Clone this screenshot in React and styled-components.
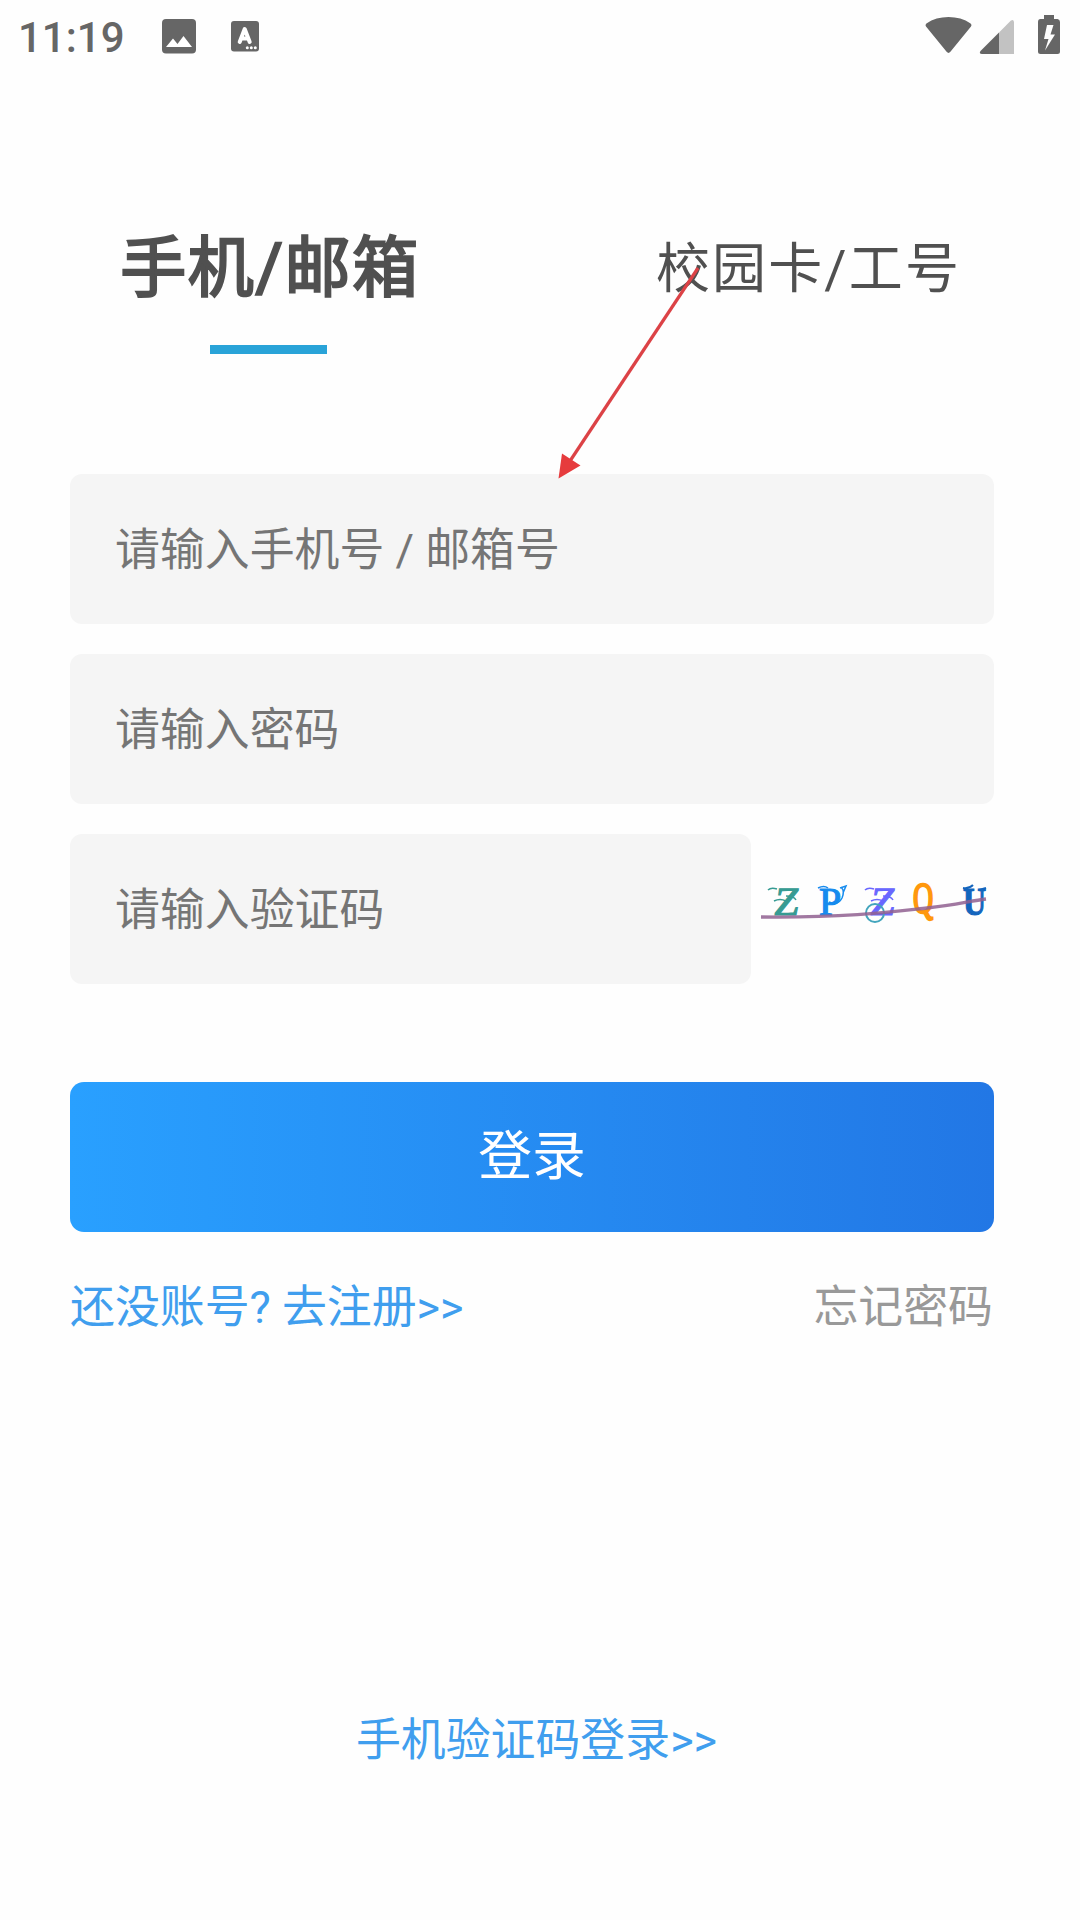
import styled, { createGlobalStyle } from "styled-components";

const GlobalStyle = createGlobalStyle`
  * {
    box-sizing: border-box;
  }

  body {
    margin: 0;
    background-color: #fff;
    font-family: Roboto, "Noto Sans CJK SC", sans-serif;
  }
`;

const Screen = styled.div`
  position: relative;
  display: flex;
  flex-direction: column;
  width: 1080px;
  height: 1920px;
  background-color: #fefefe;
  overflow: hidden;
`;

const StatusBar = styled.header`
  display: flex;
  justify-content: space-between;
  align-items: center;
  height: 74px;
  padding: 0 20px 0 18px;
  color: #666;
`;

const StatusGroup = styled.div`
  display: flex;
  align-items: center;
`;

const Clock = styled.span`
  width: 144px;
  padding-top: 2px;
  font-size: 42px;
  font-weight: 500;
  line-height: 72px;
`;

const StatusIcon = styled.svg`
  display: block;
  width: ${(props) => props.$width}px;
  height: 74px;
`;

const Tabs = styled.nav`
  display: grid;
  grid-template-columns: 1fr 1fr;
  height: 400px;
  padding-top: 145px;
`;

const Tab = styled.div`
  display: flex;
  flex-direction: column;
  align-items: center;
  gap: 26px;
  padding-right: ${(props) => (props.$active ? 0 : 3)}px;
  color: #505050;
  font-size: ${(props) => (props.$active ? 66 : 54)}px;
  -webkit-text-stroke: ${(props) => (props.$active ? "2.3px #505050" : "0")};
  letter-spacing: ${(props) => (props.$active ? 1.7 : 2.15)}px;
  line-height: ${(props) => (props.$active ? 100 : 102)}px;

  &::after {
    content: "";
    width: 117px;
    height: 9px;
    margin-right: 3px;
    background-color: ${(props) => (props.$active ? "#29a3d8" : "transparent")};
  }
`;

const Form = styled.main`
  display: flex;
  flex-direction: column;
  gap: 30px;
  width: 924px;
  margin-left: 70px;
`;

const Field = styled.div`
  width: ${(props) => props.$width || 924}px;
  height: 150px;
  padding: 2px 0 0 45px;
  border-radius: 12px;
  background-color: #f5f5f5;
  color: #757575;
  font-size: 44.9px;
  line-height: 150px;
  white-space: pre;
`;

const CaptchaRow = styled.div`
  display: flex;
`;

const Captcha = styled.svg`
  display: block;
  width: 243px;
  height: 150px;
  font-family: "Liberation Serif", serif;
`;

const LoginButton = styled.button`
  height: 150px;
  margin-top: 68px;
  padding: 0;
  border: 0;
  border-radius: 14px;
  background: linear-gradient(90deg, #29a0ff, #2277e5);
  color: #fff;
  font: inherit;
  font-size: 53.8px;
  line-height: 146px;
`;

const Links = styled.div`
  display: flex;
  justify-content: space-between;
  margin-top: 13px;
  padding-right: 1px;
`;

const TextLink = styled.a`
  color: ${(props) => (props.$muted ? "#999" : "#409eee")};
  font-size: 44.9px;
  line-height: 66px;
`;

const Footer = styled.footer`
  margin: auto 0 146px;
  padding-right: 7px;
  text-align: center;
`;

const Arrow = styled.svg`
  position: absolute;
  left: 550px;
  top: 260px;
  width: 160px;
  height: 225px;
`;

function StatusIcons() {
  return (
    <StatusIcon $width={138} viewBox="922 0 138 74" fill="#666">
      <path d="M926 26.5Q924.7 25 926.4 23.4Q936 17 948.5 17Q961 17 970.6 23.4Q972.3 25 971 26.5L950.4 51.8Q948.5 54 946.6 51.8Z" />
      <path d="M999 32.5V54H982Q978.5 53.5 980.5 51Z" />
      <path d="M999 32.5L1010.7 20.7Q1013.5 18.8 1014 22V54H999Z" fill="#c2c2c2" />
      <path
        fillRule="evenodd"
        d="M1044 15H1054V19H1057.5Q1060 19.5 1060 22V51.5Q1060 54 1057.5 54H1040.5Q1038 54 1038 51.5V22Q1038 19 1040.5 19H1044ZM1047 25L1044 39H1048.5L1045 50.5L1055 34.5H1050.5L1053.5 25Z"
      />
    </StatusIcon>
  );
}

function NotificationIcons() {
  return (
    <StatusIcon $width={98} viewBox="162 0 98 74" fill="#666">
      <rect x="162" y="19" width="34" height="34.5" rx="4" />
      <path d="M166 47L173 38.5L177.5 44L183.5 36L192 47Z" fill="#fff" />
      <rect x="231" y="21" width="28" height="30.5" rx="3" />
      <path
        d="M239.7 42L244.7 29L249.7 42M241.5 38.5H248"
        fill="none"
        stroke="#fff"
        strokeWidth="4"
        strokeLinecap="round"
        strokeLinejoin="round"
      />
      <g fill="#fff">
        <circle cx="247.3" cy="47.8" r="1.5" />
        <circle cx="251.3" cy="47.8" r="1.5" />
        <circle cx="255.3" cy="47.8" r="1.5" />
      </g>
    </StatusIcon>
  );
}

function CaptchaImage() {
  return (
    <Captcha viewBox="751 834 243 150">
      <g fontSize="40" strokeWidth="1.2">
        <text transform="translate(773 915) skewX(-7) scale(1.05 1)" fill="#369b93" stroke="#369b93">Z</text>
        <text transform="translate(819 915)" fill="#168bee" stroke="#168bee">P</text>
        <text transform="translate(869 915) skewX(-7) scale(1.05 1)" fill="#6967ff" stroke="#6967ff">Z</text>
        <text transform="translate(913 913) scale(.7 1.1)" fill="#ff980d" stroke="#ff980d" strokeWidth="2.2">Q</text>
        <text transform="translate(963 915) scale(.8 1)" fill="#1465bd" stroke="#1465bd" fontWeight="700">U</text>
      </g>
      <g fill="none" strokeWidth="1.5">
        <path d="M768 890Q771 887 777 889M774 901Q780 898 786 901M786 896Q794 896 796 900" stroke="#369b93" />
        <path d="M818 888Q824 885 828 888M829 902Q838 906 842 898Q845 891 841 887M840 888L846 886L843 893" stroke="#168bee" />
        <path d="M865 890Q868 887 874 889M871 901Q877 898 883 901M883 896Q891 896 893 900" stroke="#6967ff" />
        <path d="M963 888Q969 889 973 885M979 890L986 888" stroke="#1465bd" strokeWidth="2" />
        <circle cx="875" cy="913" r="9" stroke="#43a5bd" strokeWidth="2" />
      </g>
      <path d="M761 917C850 918 899 911 927 908S970 901 986 899" fill="none" stroke="#906091" strokeOpacity=".85" strokeWidth="3.4" />
    </Captcha>
  );
}

export default function App() {
  return (
    <Screen>
      <GlobalStyle />
      <StatusBar>
        <StatusGroup>
          <Clock>11:19</Clock>
          <NotificationIcons />
        </StatusGroup>
        <StatusIcons />
      </StatusBar>
      <Tabs>
        <Tab $active>手机/邮箱</Tab>
        <Tab>校园卡/工号</Tab>
      </Tabs>
      <Form>
        <Field>请输入手机号 / 邮箱号</Field>
        <Field>请输入密码</Field>
        <CaptchaRow>
          <Field $width={681}>请输入验证码</Field>
          <CaptchaImage />
        </CaptchaRow>
        <LoginButton>登录</LoginButton>
        <Links>
          <TextLink>还没账号? 去注册&gt;&gt;</TextLink>
          <TextLink $muted>忘记密码</TextLink>
        </Links>
      </Form>
      <Footer>
        <TextLink>手机验证码登录&gt;&gt;</TextLink>
      </Footer>
      <Arrow viewBox="550 260 160 225">
        <path d="M698 268L570 461" stroke="#dc4246" strokeWidth="3.2" />
        <path d="M558.5 478.5L562 453.5L580.5 465.5Z" fill="#e63b3d" />
      </Arrow>
    </Screen>
  );
}
